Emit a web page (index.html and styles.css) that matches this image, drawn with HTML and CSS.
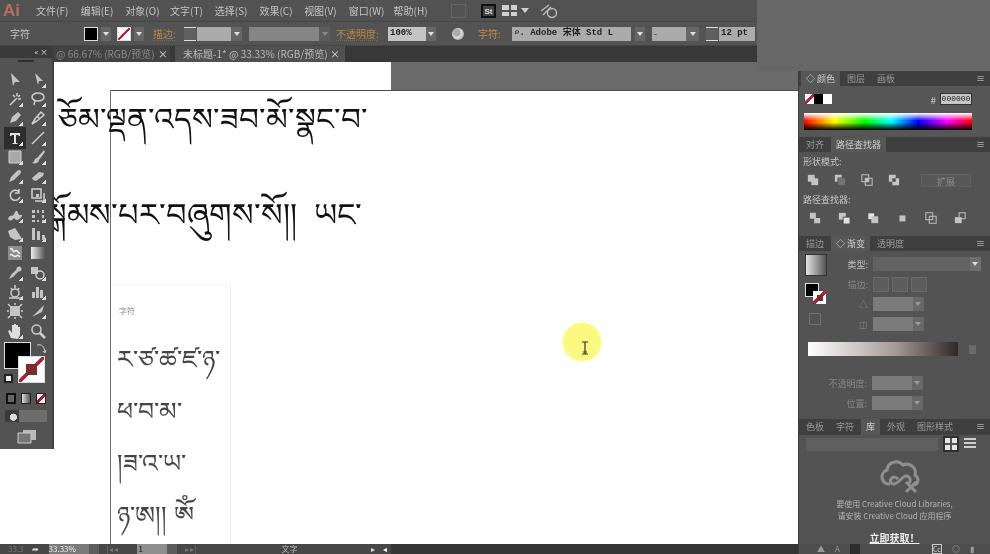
FILE: index.html
```html
<!DOCTYPE html>
<html lang="zh-CN">

<head>
   <meta charset="UTF-8">
   <meta name="viewport" content="width=device-width, initial-scale=1.0">
   <title>Adobe Illustrator</title>
   <link rel="stylesheet" href="styles.css">
</head>

<body>
   <div class="menu-bar">
      <span class="logo">Ai</span>
      <nav class="menu-items">
         <span>文件(F)</span><span>编辑(E)</span><span>对象(O)</span><span>文字(T)</span><span>选择(S)</span>
         <span>效果(C)</span><span>视图(V)</span><span>窗口(W)</span><span>帮助(H)</span>
      </nav>
      <span class="app-btn app-dim"></span>
      <span class="app-btn app-st">St</span>
      <svg class="app-layout" width="30" height="14" viewBox="0 0 30 14">
         <path d="M1 1h7v5H1zM10 1h6v5h-6zM1 8h7v4H1zM10 8h6v4h-6z" fill="#d0d0d0" />
         <path d="M20 4h8l-4 5z" fill="#d0d0d0" />
      </svg>
      <svg class="app-sync" width="18" height="16" viewBox="0 0 18 16" fill="none" stroke="#bbb" stroke-width="1.4">
         <path d="M1 8l8-6M3 12l8-8" />
         <circle cx="12" cy="10" r="4.5" />
      </svg>
   </div>

   <div class="control-bar">
      <span class="ctl-title">字符</span>
      <span class="swatch swatch-fill"></span>
      <span class="arrow-btn w-10"></span>
      <span class="swatch swatch-none"></span>
      <span class="arrow-btn w-10"></span>
      <span class="ctl-label m-stroke">描边:</span>
      <span class="spin"></span>
      <span class="field w-34"></span>
      <span class="arrow-btn w-11"></span>
      <span class="field field-dim w-70 m-brush"></span>
      <span class="arrow-btn arrow-dim w-11"></span>
      <span class="ctl-label m-opacity">不透明度:</span>
      <span class="field w-38 m-opval">100%</span>
      <span class="arrow-btn w-10"></span>
      <span class="globe"></span>
      <span class="ctl-label m-char">字符:</span>
      <span class="field field-font">&#8981;. Adobe 宋体 Std L</span>
      <span class="arrow-btn w-10 m-2"></span>
      <span class="field w-34 m-style">-</span>
      <span class="arrow-btn w-13"></span>
      <span class="spin m-size"></span>
      <span class="field field-mono w-36">12 pt</span>
   </div>

   <div class="tab-bar">
      <div class="doc-tab">@ 66.67% (RGB/预览)<span class="tab-x">×</span></div>
      <div class="doc-tab doc-tab-active">未标题-1* @ 33.33% (RGB/预览)<span class="tab-x">×</span></div>
   </div>

   <div class="workspace">
      <main class="canvas">
         <div class="pasteboard"></div>
         <div class="artboard-top"></div>
         <div class="artboard-left"></div>

         <div class="tibetan line-1">ཅོམ་ལྡན་འདས་ཟབ་མོ་སྣང་བ་</div>
         <div class="tibetan line-2">སྒོམས་པར་བཞུགས་སོ།།  ཡང་</div>

         <div class="char-panel">
            <div class="char-title">字符</div>
            <div class="tibetan-small row-1">ར་ཙ་ཚ་ཛ་ཉ་</div>
            <div class="tibetan-small row-2">ཕ་བ་མ་</div>
            <div class="tibetan-small row-3">།ཟ་འ་ཡ་</div>
            <div class="tibetan-small row-4">ཉ་ཨ།། ༀ</div>
         </div>

         <div class="cursor-spot">
            <svg width="8" height="14" viewBox="0 0 8 14" fill="none" stroke="#333" stroke-width="1.2">
               <path d="M1 1h6M4 1v12M1 13h6M2 11h4" />
            </svg>
         </div>

         <aside class="toolbar">
            <div class="tool-head">
               <span class="tool-head-icons">«&nbsp;×</span>
            </div>
            <div class="tool-grip"></div>
            <div class="tool-grid">
               <svg viewBox="0 0 16 16"><path d="M4 1l9 9H8l-2 4z" class="i-f" /></svg>
               <svg class="more" viewBox="0 0 16 16"><path d="M5 1l8 8-4 0-1 4z" class="i-f" /></svg>
               <svg class="more" viewBox="0 0 16 16"><path d="M3 14l7-7M10 2v3M13 4l-2 2M14 8h-3M6 4l2 2" class="i-s" /></svg>
               <svg class="more" viewBox="0 0 16 16"><ellipse cx="8" cy="6" rx="6" ry="4" class="i-s" /><path d="M5 9l-1 5" class="i-s" /></svg>
               <svg class="more" viewBox="0 0 16 16"><path d="M3 13l2-6 6-5 3 3-5 6z" class="i-f" /></svg>
               <svg class="more" viewBox="0 0 16 16"><path d="M2 14l3-5 6-7 3 3-7 6zM7 6l3 3" class="i-s" /></svg>
               <svg class="more tool-on" viewBox="0 0 16 16"><path d="M3 3h10v3h-1l-1-1H9v8h1.500v1h-5v-1H7V5H5L4 6H3z" fill="#e4e4e4" /></svg>
               <svg class="more" viewBox="0 0 16 16"><path d="M2 14L14 2" class="i-s" /></svg>
               <svg class="more" viewBox="0 0 16 16"><path d="M2 2h12v12H2z" fill="#a8a8a8" stroke="#d0d0d0" /></svg>
               <svg class="more" viewBox="0 0 16 16"><path d="M14 1L7 9l2 2 6-8zM7 9c-3 0-2 4-5 5 3 1 7 0 7-3z" class="i-f" /></svg>
               <svg class="more" viewBox="0 0 16 16"><path d="M2 14l2-5 6-6 3 3-6 6z" class="i-f" /><circle cx="12" cy="4" r="2" class="i-f" /></svg>
               <svg class="more" viewBox="0 0 16 16"><path d="M2 10l7-6 5 1-1 3-7 5-3-1z" class="i-f" /></svg>
               <svg class="more" viewBox="0 0 16 16"><path d="M12 5a5 5 0 1 0 1 5M12 2v4H8" class="i-s" /></svg>
               <svg class="more" viewBox="0 0 16 16"><path d="M2 2h9v9H2zM5 14h9V6" class="i-s" /><path d="M6 7h3v3H6z" class="i-f" /></svg>
               <svg class="more" viewBox="0 0 16 16"><path d="M1 12c2-6 4-1 6-5s3-4 4-1 3 2 4 2-2 5-5 5-2-3-4-1-3 2-5 0z" class="i-f" /></svg>
               <svg class="more" viewBox="0 0 16 16"><path d="M2 3h3v3H2zM7 3h2v3H7zM12 3h2v3h-2zM2 8h3v3H2zM12 8h2v3h-2zM2 13h3v2H2zM7 13h2v2H7zM12 13h2v2h-2z" class="i-f" /></svg>
               <svg class="more" viewBox="0 0 16 16"><path d="M1 5l7-3 4 6 3 5-7 1-5-3z" class="i-f" /></svg>
               <svg class="more" viewBox="0 0 16 16"><path d="M2 2h3v12H2zM7 5h3v9H7zM12 9h3v5h-3z" class="i-f" /></svg>
               <svg viewBox="0 0 16 16"><path d="M1 1h14v14H1z" fill="#8d8d8d" /><path d="M3 4c3-2 2 4 5 2s3 3 5 2M3 10c3-2 3 3 6 1s2 1 4 0" stroke="#ececec" stroke-width="1.600" fill="none" /></svg>
               <svg viewBox="0 0 16 16"><rect x="1" y="2" width="14" height="12" fill="url(#tool-grad)" /></svg>
               <svg class="more" viewBox="0 0 16 16"><path d="M2 14l2-4 6-6 2 2-6 6z" class="i-f" /><circle cx="12" cy="4" r="2.500" class="i-f" /></svg>
               <svg class="more" viewBox="0 0 16 16"><path d="M1 2h7v7H1z" class="i-f" /><circle cx="10" cy="10" r="4" class="i-s" /></svg>
               <svg class="more" viewBox="0 0 16 16"><circle cx="8" cy="9" r="4" class="i-s" /><path d="M8 1v3M4 4l1 2M12 4l-1 2M2 14h12" class="i-s" /></svg>
               <svg class="more" viewBox="0 0 16 16"><path d="M2 8h3v6H2zM6 3h3v11H6zM10 6h3v8h-3z" class="i-f" /></svg>
               <svg viewBox="0 0 16 16"><path d="M3 3h10v10H3z" class="i-f" /><path d="M1 1l2 2M15 1l-2 2M1 15l2-2M15 15l-2-2M8 0v2M8 14v2M0 8h2M14 8h2" class="i-s" /></svg>
               <svg class="more" viewBox="0 0 16 16"><path d="M2 14L14 2 12 9z" class="i-f" /></svg>
               <svg class="more" viewBox="0 0 16 16"><path d="M4 15L1 8l2-1 2 3V2h2v6V1h2v7-6h2v6-4h2v8l-2 4z" fill="#dedede" /></svg>
               <svg viewBox="0 0 16 16"><circle cx="6.500" cy="6.500" r="4.500" class="i-s" /><path d="M10 10l5 5" stroke="#d0d0d0" stroke-width="2.500" /></svg>
            </div>

            <div class="fill-stroke">
               <div class="big-stroke"></div>
               <div class="big-fill"></div>
               <svg class="mini-swap" width="11" height="11" viewBox="0 0 11 11" fill="none" stroke="#ccc"><path d="M1 2c5-1 7 1 8 7" /><path d="M7 8l2 2 1-3" /></svg>
               <div class="mini-default"></div>
            </div>
            <div class="mode-row">
               <span class="mode-box mode-color"></span>
               <span class="mode-box mode-grad"></span>
               <span class="mode-box mode-none"></span>
            </div>
            <div class="draw-row">
               <span class="draw-on"></span>
               <span class="draw-off"></span>
            </div>
            <svg class="screen-mode" width="20" height="15" viewBox="0 0 20 15">
               <path d="M6 1h13v10H6z" fill="#b9b9b9" />
               <path d="M1 4h13v10H1z" fill="#777" stroke="#ccc" />
            </svg>
         </aside>
      </main>

      <aside class="dock">
         <section class="panel panel-color">
            <div class="panel-tabs">
               <span class="ptab ptab-on">◇ 颜色</span><span class="ptab">图层</span><span class="ptab">画板</span>
               <span class="ptab-menu">≡</span>
            </div>
            <div class="color-row">
               <span class="none-chip"></span><span class="black-chip"></span><span class="white-chip"></span>
               <span class="hash">#</span><span class="hex">000000</span>
            </div>
            <div class="spectrum"></div>
         </section>

         <section class="panel panel-path">
            <div class="panel-tabs">
               <span class="ptab">对齐</span><span class="ptab ptab-on">路径查找器</span>
               <span class="ptab-menu">≡</span>
            </div>
            <div class="p-label">形状模式:</div>
            <div class="icon-row">
               <svg viewBox="0 0 14 14"><path d="M1 1h8v8H1z" class="i-f" /><path d="M5 5h8v8H5z" class="i-f" /></svg>
               <svg viewBox="0 0 14 14"><path d="M1 1h8v3H4v5H1z" class="i-f" /><path d="M5 5h8v8H5z" class="i-d" /></svg>
               <svg viewBox="0 0 14 14"><path d="M1 1h8v8H1zM5 5h8v8H5z" class="i-o" /><path d="M5 5h4v4H5z" class="i-f" /></svg>
               <svg viewBox="0 0 14 14"><path d="M1 1h8v4H5v4H1zM9 5h4v8H5V9h4z" class="i-f" /></svg>
               <span class="expand">扩展</span>
            </div>
            <div class="p-label">路径查找器:</div>
            <div class="icon-row icon-row-6">
               <svg viewBox="0 0 14 14"><path d="M1 1h7v6h5v6H6V8H1z" class="i-f" /></svg>
               <svg viewBox="0 0 14 14"><path d="M1 1h8v8H1z" class="i-f" /><path d="M6 6h8v8H6z" class="i-w" /></svg>
               <svg viewBox="0 0 14 14"><path d="M1 1h8v8H1z" class="i-w" /><path d="M5 5h8v8H5z" class="i-f" /></svg>
               <svg viewBox="0 0 14 14"><path d="M4 4h7v7H4z" class="i-f" /></svg>
               <svg viewBox="0 0 14 14"><path d="M1 1h8v8H1zM5 5h8v8H5z" class="i-o" /></svg>
               <svg viewBox="0 0 14 14"><path d="M6 1h7v7H6z" class="i-o" /><path d="M1 6h8v7H1z" class="i-f" /></svg>
            </div>
         </section>

         <section class="panel panel-grad">
            <div class="panel-tabs">
               <span class="ptab">描边</span><span class="ptab ptab-on">◇ 渐变</span><span class="ptab">透明度</span>
               <span class="ptab-menu">≡</span>
            </div>
            <div class="grad-top">
               <div class="grad-preview">
                  <div class="grad-thumb"></div>
                  <div class="grad-swatches">
                     <span class="gs-stroke"></span>
                     <span class="gs-fill"></span>
                  </div>
                  <div class="grad-aspect"></div>
               </div>
               <div class="grad-fields">
                  <div class="g-row"><label>类型:</label><span class="g-select"></span></div>
                  <div class="g-row g-dim"><label>描边:</label><span class="g-stroke-btn"></span><span class="g-stroke-btn"></span><span class="g-stroke-btn"></span></div>
                  <div class="g-row g-dim"><label>△</label><span class="g-input"></span></div>
                  <div class="g-row g-dim"><label>◫</label><span class="g-input"></span></div>
               </div>
            </div>
            <div class="grad-slider-row">
               <div class="grad-slider"></div>
               <span class="trash"></span>
            </div>
            <div class="g-row g-low g-dim"><label>不透明度:</label><span class="g-input"></span></div>
            <div class="g-row g-low g-dim"><label>位置:</label><span class="g-input"></span></div>
         </section>

         <section class="panel panel-lib">
            <div class="panel-tabs">
               <span class="ptab">色板</span><span class="ptab">字符</span><span class="ptab ptab-on">库</span><span class="ptab">外观</span><span class="ptab">图形样式</span>
               <span class="ptab-menu">≡</span>
            </div>
            <div class="lib-row">
               <span class="lib-select"></span>
               <span class="lib-grid"></span>
               <span class="lib-list"></span>
            </div>
            <svg class="cloud" width="44" height="38" viewBox="0 0 44 38" fill="none" stroke="#8f8f8f" stroke-width="3">
               <path d="M12 28C3 28 1 17 9 14 10 6 20 3 25 9c7-3 14 3 12 10 5 4 3 9-1 10" />
               <path d="M20 23c-5-6-11 3-5 5 4 1 8-6 12-8 6-1 7 7 2 8" />
               <path d="M28 26l10 10M38 26L28 36" />
            </svg>
            <p class="lib-text">要使用 Creative Cloud Libraries,<br>请安装 Creative Cloud 应用程序</p>
            <a class="lib-link">立即获取！</a>
         </section>
         <div class="dock-foot">
            <span class="foot-icon">▲</span><span class="foot-icon">A</span><span class="foot-dark"></span>
            <span class="foot-box">Cc</span><span class="foot-icon">◎</span><span class="foot-icon">▮</span>
         </div>
      </aside>
   </div>

   <div class="status-bar">
      <span class="st-dim">33.3</span><span class="st-arrow">➦</span>
      <span class="st-zoom">33.33%</span><span class="st-drop"></span>
      <span class="st-dim st-nav">|◂ ◂</span>
      <span class="st-page">1</span><span class="st-drop"></span>
      <span class="st-dim st-nav">▸ ▸|</span>
      <span class="st-tool">文字</span>
      <span class="st-play">▸</span><span class="st-back">◂</span>
      <span class="st-scroll"></span>
   </div>

   <div class="blur-patch"></div>

   <svg class="defs" width="0" height="0">
      <defs>
         <linearGradient id="tool-grad">
            <stop offset="0" stop-color="#eee" />
            <stop offset="1" stop-color="#555" />
         </linearGradient>
      </defs>
   </svg>
</body>

</html>
```

FILE: styles.css
```css
* {
   box-sizing: border-box;
}

html,
body {
   margin: 0;
   height: 100%;
   overflow: hidden;
}

/* the reference is a soft video frame */
body {
   position: relative;
   display: flex;
   flex-direction: column;
   width: 990px;
   height: 554px;
   font-family: "Noto Sans CJK SC", "Liberation Sans", sans-serif;
   font-size: 10px;
   color: #c4c4c4;
   background: #535353;
   filter: blur(0.5px);
}

.defs {
   position: absolute;
}

/* top menu */
.menu-bar {
   height: 22px;
   flex: none;
   display: flex;
   align-items: center;
   background: #525252;
   border-bottom: 1px solid #474747;
}

.logo {
   width: 36px;
   padding-left: 3px;
   font: bold 17px "Liberation Sans", sans-serif;
   color: #b56f5c;
}

.menu-items {
   display: flex;
   width: 408px;
   gap: 11.7px;
   white-space: nowrap;
}

.menu-items span {
   width: 33px;
}

.app-btn {
   width: 15px;
   height: 14px;
   font: bold 8px "Liberation Sans", sans-serif;
   text-align: center;
   line-height: 12px;
}

.app-dim {
   margin-left: 7px;
   border: 1px solid #666;
}

.app-st {
   color: #ddd;
   margin-left: 15px;
   border: 2px solid #111;
   background: #444;
}

.app-layout {
   margin-left: 5px;
}

.app-sync {
   margin-left: 9px;
}

/* control bar */
.control-bar {
   height: 24px;
   flex: none;
   display: flex;
   align-items: center;
   background: #535353;
   border-bottom: 1px solid #474747;
   padding-left: 10px;
}

.ctl-title {
   width: 74px;
}

.swatch {
   width: 14px;
   height: 14px;
   border: 1px solid #ddd;
   margin-right: 3px;
}

.swatch-fill {
   background: #000;
}

.swatch-none {
   margin-left: 6px;
   background: linear-gradient(135deg, #fff 0 44%, #c8203c 44% 56%, #fff 56%);
}

.arrow-btn {
   height: 14px;
   display: block;
   background: #666;
   position: relative;
}

.arrow-btn::after {
   content: "";
   position: absolute;
   left: 50%;
   top: 5px;
   margin-left: -3px;
   border: 3px solid transparent;
   border-top: 4px solid #e0e0e0;
   border-bottom: 0;
}

.arrow-dim {
   background: #5c5c5c;
}

.arrow-dim::after {
   border-top-color: #888;
}

.w-10 {
   width: 10px;
}

.w-11 {
   width: 11px;
}

.w-13 {
   width: 13px;
}

.w-34 {
   width: 34px;
}

.w-36 {
   width: 36px;
}

.w-38 {
   width: 38px;
}

.w-70 {
   width: 70px;
}

.ctl-label {
   color: #b98842;
   white-space: nowrap;
   border-bottom: 1px dotted #8a6a3a;
   line-height: 13px;
}

.m-stroke {
   margin-left: 9px;
   width: 22px;
}

.spin {
   width: 12px;
   height: 14px;
   margin-left: 9px;
   background: #5f5f5f;
   border-top: 1px solid #ddd;
   border-bottom: 1px solid #ddd;
}

.field {
   height: 14px;
   line-height: 13px;
   padding-left: 2px;
   color: #222;
   background: #ababab;
   white-space: nowrap;
   overflow: hidden;
   margin-left: 1px;
   font-size: 9px;
}

.field-dim {
   background: #858585;
}

.m-brush {
   margin-left: 7px;
}

.m-opacity {
   margin-left: 6px;
   width: 41px;
}

.m-opval {
   margin-left: 11px;
   background: #c4c4c4;
   font-family: "Liberation Mono", monospace;
   font-weight: bold;
}

.globe {
   width: 12px;
   height: 12px;
   margin: 0 14px 0 16px;
   border-radius: 50%;
   background: radial-gradient(circle at 40% 40%, #aaa 0 30%, #ddd 45%, #777);
}

.m-char {
   width: 26px;
   margin-right: 7px;
   color: #c98a44;
   border: 0;
}

.field-font {
   width: 119px;
   font-family: "Liberation Mono", "Noto Sans CJK SC", monospace;
   font-weight: bold;
}

.m-2 {
   margin-left: 4px;
}

.m-style {
   margin-left: 7px;
}

.m-size {
   margin-left: 7px;
}

.field-mono {
   font-family: "Liberation Mono", monospace;
   font-weight: bold;
}

/* document tabs */
.tab-bar {
   height: 16px;
   flex: none;
   display: flex;
   padding-left: 54px;
   gap: 5px;
   background: #383838;
}

.doc-tab {
   width: 116px;
   display: flex;
   justify-content: space-between;
   padding: 0 2px;
   line-height: 16px;
   color: #8a8a8a;
   background: #424242;
   white-space: nowrap;
}

.doc-tab-active {
   width: 170px;
   padding: 0 5px 0 8px;
   color: #bbb;
   background: #505050;
}

.tab-x {
   color: #ddd;
}

/* canvas */
.workspace {
   flex: 1;
   display: flex;
   min-height: 0;
}

.canvas {
   position: relative;
   flex: 1;
   background: #fff;
}

.pasteboard {
   position: absolute;
   left: 391px;
   top: 0;
   right: 0;
   height: 28px;
   background: #6b6b6b;
}

.artboard-top {
   position: absolute;
   left: 110px;
   top: 28px;
   right: 0;
   height: 1px;
   background: #4c4c4c;
}

.artboard-left {
   position: absolute;
   left: 110px;
   top: 28px;
   bottom: 0;
   width: 1px;
   background: #6e6e6e;
}

.tibetan {
   position: absolute;
   font-family: "Noto Sans", "DejaVu Sans", serif;
   color: #111;
   white-space: pre;
}

.line-1 {
   right: 430px;
   top: 23px;
   font-size: 31px;
}

.line-2 {
   right: 436px;
   top: 117px;
   font-size: 32px;
}

.char-panel {
   position: absolute;
   left: 111px;
   top: 222px;
   width: 120px;
   height: 270px;
   border-right: 1px solid #f1f1f1;
   border-top: 1px solid #f6f6f6;
}

.char-title {
   margin: 20px 0 26px 8px;
   font-size: 8px;
   color: #8a8a8a;
}

.tibetan-small {
   font-family: "Noto Sans", "DejaVu Sans", serif;
   font-size: 25px;
   color: #444;
   white-space: nowrap;
   margin: 20px 0 0 6px;
   line-height: 32px;
}

.cursor-spot {
   position: absolute;
   left: 563px;
   top: 261px;
   width: 38px;
   height: 38px;
   display: flex;
   align-items: center;
   justify-content: center;
   padding: 12px 0 0 5px;
   border-radius: 50%;
   background: #fbf97f;
   box-shadow: 0 0 4px #fdfcb0;
}

/* tools */
.toolbar {
   position: absolute;
   left: 0;
   top: -16px;
   width: 54px;
   height: 403px;
   background: #535353;
   border-right: 2px solid #3e3e3e;
}

.tool-head {
   height: 12px;
   background: #3a3a3a;
   color: #ddd;
   font-size: 8px;
   line-height: 12px;
   text-align: right;
   padding-right: 4px;
}

.tool-grip {
   width: 16px;
   height: 2px;
   margin: 2px auto 0;
   background: #2f2f2f;
}

.tool-grid {
   display: grid;
   grid-template-columns: 16px 16px;
   grid-auto-rows: 19.3px;
   column-gap: 7px;
   padding: 8px 0 0 7px;
   align-items: center;
}

.tool-grid svg {
   width: 16px;
   height: 16px;
   overflow: visible;
}

.more {
   background: linear-gradient(135deg, transparent 50%, #ddd 50%) right bottom / 4px 4px no-repeat;
}

.tool-on {
   background-color: #2d2d2d;
   outline: 3px solid #2d2d2d;
}

.i-f {
   fill: #c4c4c4;
}

.i-s {
   fill: none;
   stroke: #cfcfcf;
   stroke-width: 1.5;
}

.i-d {
   fill: #747474;
}

.i-w {
   fill: #e2e2e2;
   stroke: #444;
}

.i-o {
   fill: none;
   stroke: #c0c0c0;
   stroke-width: 1.2;
}

.fill-stroke {
   position: relative;
   height: 49px;
   margin-top: 2px;
}

.big-stroke {
   position: absolute;
   left: 4px;
   top: 0;
   width: 27px;
   height: 27px;
   background: #000;
   border: 1px solid #ddd;
}

.big-fill {
   position: absolute;
   left: 18px;
   top: 14px;
   width: 27px;
   height: 27px;
   background:
      linear-gradient(#7d2a2a, #7d2a2a) center / 11px 11px no-repeat,
      linear-gradient(135deg, #fff 0 45%, #b3213a 45% 55%, #fff 55%);
   border: 1px solid #ddd;
}

.mini-swap {
   position: absolute;
   left: 36px;
   top: 1px;
}

.mini-default {
   position: absolute;
   left: 4px;
   top: 32px;
   width: 9px;
   height: 9px;
   background: #eee;
   border: 2px solid #222;
}

.mode-row {
   display: flex;
   gap: 5px;
   padding-left: 6px;
   align-items: center;
   height: 14px;
}

.mode-box {
   width: 10px;
   height: 11px;
   border: 1px solid #222;
}

.mode-color {
   background: #666;
   border: 2px solid #111;
}

.mode-grad {
   background: linear-gradient(90deg, #ddd, #555);
}

.mode-none {
   background: linear-gradient(135deg, #eee 0 40%, #a01a2c 40% 60%, #eee 60%);
}

.draw-row {
   display: flex;
   margin: 5px 0 0 5px;
   height: 12px;
}

.draw-on {
   width: 14px;
   background: radial-gradient(circle at 60% 60%, #ddd 0 30%, #3a3a3a 35%);
}

.draw-off {
   width: 28px;
   background: #6d6d6d;
}

.screen-mode {
   display: block;
   margin: 7px 0 0 17px;
}

/* right dock */
.dock {
   position: relative;
   width: 192px;
   flex: none;
   display: flex;
   flex-direction: column;
   background: #535353;
   border-left: 1px solid #3b3b3b;
}

.panel {
   margin-top: 1px;
   overflow: hidden;
}

.panel-color {
   height: 65px;
   margin-top: 9px;
   background: #565656;
}

.panel-path {
   height: 97px;
}

.panel-grad {
   height: 182px;
   margin-top: 2px;
}

.panel-lib {
   flex: 1;
   position: relative;
}

.panel-tabs {
   height: 15px;
   display: flex;
   align-items: stretch;
   padding-left: 2px;
   gap: 2px;
   background: #3f3f3f;
   font-size: 9px;
   line-height: 15px;
   color: #999;
}

.ptab {
   padding: 0 5px;
   white-space: nowrap;
}

.ptab-on {
   background: #575757;
   color: #ccc;
}

.ptab-menu {
   margin-left: auto;
   padding-right: 5px;
   color: #ddd;
}

.color-row {
   display: flex;
   align-items: center;
   height: 26px;
   padding: 0 18px 0 6px;
}

.none-chip,
.black-chip,
.white-chip {
   width: 9px;
   height: 10px;
}

.none-chip {
   background: linear-gradient(135deg, #fff 0 40%, #b3213a 40% 60%, #fff 60%);
}

.black-chip {
   background: #000;
}

.white-chip {
   background: #fff;
}

.hash {
   margin-left: auto;
   margin-right: 4px;
}

.hex {
   width: 32px;
   height: 12px;
   font-family: "Liberation Mono", monospace;
   font-size: 8px;
   line-height: 10px;
   text-align: center;
   color: #222;
   background: #c6c6c6;
   border: 1px solid #333;
}

.spectrum {
   width: 168px;
   height: 17px;
   margin: 1px 0 0 5px;
   background:
      linear-gradient(#fff 0, rgba(255, 255, 255, 0) 45%, rgba(0, 0, 0, 0) 55%, #000 100%),
      linear-gradient(90deg, #f00, #ff0 18%, #0f0 36%, #0ff 52%, #00f 68%, #f0f 85%, #f00);
}

.p-label {
   padding: 3px 0 0 4px;
   height: 18px;
   color: #c6c6c6;
   font-size: 9px;
}

.icon-row {
   display: flex;
   align-items: center;
   gap: 15px;
   height: 20px;
   padding-left: 8px;
}

.icon-row svg {
   width: 12px;
   height: 12px;
}

.icon-row-6 {
   gap: 17px;
   padding-left: 10px;
}

.expand {
   width: 50px;
   height: 13px;
   margin-left: 6px;
   text-align: center;
   line-height: 13px;
   font-size: 9px;
   color: #8d8d8d;
   border: 1px solid #606060;
   background: #585858;
}

.grad-top {
   display: flex;
   padding: 3px 0 0 6px;
}

.grad-preview {
   width: 42px;
}

.grad-thumb {
   width: 22px;
   height: 22px;
   background: linear-gradient(90deg, #e4e4e4, #555);
   border: 1px solid #333;
}

.grad-swatches {
   position: relative;
   height: 24px;
   margin-top: 7px;
}

.gs-stroke {
   position: absolute;
   left: 0;
   top: 0;
   width: 14px;
   height: 14px;
   background: #000;
   border: 1px solid #ddd;
}

.gs-fill {
   position: absolute;
   left: 8px;
   top: 8px;
   width: 13px;
   height: 13px;
   background:
      linear-gradient(#7d2a2a, #7d2a2a) center / 6px 6px no-repeat,
      linear-gradient(135deg, #fff 0 40%, #b3213a 40% 60%, #fff 60%);
}

.grad-aspect {
   width: 12px;
   height: 12px;
   margin: 6px 0 0 4px;
   border: 1px solid #707070;
}

.grad-fields {
   flex: 1;
}

.g-row {
   display: flex;
   align-items: center;
   height: 20px;
   gap: 2px;
   color: #c2c2c2;
   font-size: 9px;
}

.g-row label {
   width: 24px;
   padding-right: 3px;
   text-align: right;
   white-space: nowrap;
}

.g-dim {
   color: #868686;
}

.g-select {
   width: 108px;
   height: 14px;
   background: linear-gradient(90deg, #626262 0 90%, #6e6e6e 90%);
   position: relative;
}

.g-select::after,
.g-input::after {
   content: "";
   position: absolute;
   right: 3px;
   top: 5px;
   border: 3px solid transparent;
   border-top: 4px solid #ddd;
   border-bottom: 0;
}

.g-stroke-btn {
   width: 16px;
   height: 15px;
   background: #5d5d5d;
   border: 1px solid #6a6a6a;
   margin-right: 1px;
}

.g-input {
   position: relative;
   width: 51px;
   height: 14px;
   background: linear-gradient(90deg, #7b7b7b 0 78%, #686868 78%);
}

.g-input::after {
   border-top-color: #9a9a9a;
}

.grad-slider-row {
   display: flex;
   align-items: center;
   padding: 6px 0 0 9px;
   height: 24px;
}

.grad-slider {
   width: 150px;
   height: 14px;
   background: linear-gradient(90deg, #fff, #a59b98 58%, #2e2826);
}

.trash {
   width: 7px;
   height: 9px;
   margin-left: 11px;
   background: #6a6a6a;
}

.g-low {
   padding-left: 26px;
}

.g-low label {
   width: 45px;
}

.grad-slider-row + .g-low {
   margin-top: 15px;
}

.panel-lib .panel-tabs {
   height: 16px;
}

.lib-row {
   display: flex;
   align-items: center;
   height: 18px;
   padding-left: 7px;
}

.lib-select {
   width: 132px;
   height: 13px;
   background: #5f5f5f;
}

.lib-grid,
.lib-list {
   width: 12px;
   height: 12px;
   margin-left: 7px;
}

.lib-grid {
   background:
      linear-gradient(#e6e6e6, #e6e6e6) 0 0 / 5px 5px no-repeat,
      linear-gradient(#e6e6e6, #e6e6e6) 100% 0 / 5px 5px no-repeat,
      linear-gradient(#e6e6e6, #e6e6e6) 0 100% / 5px 5px no-repeat,
      linear-gradient(#e6e6e6, #e6e6e6) 100% 100% / 5px 5px no-repeat;
   outline: 2px solid #2e2e2e;
}

.lib-list {
   background: repeating-linear-gradient(#cfcfcf 0 2px, transparent 2px 4px);
}

.cloud {
   display: block;
   margin: 3px 0 0 79px;
}

.lib-text {
   margin: 4px 0 0;
   font-size: 8px;
   line-height: 12px;
   text-align: center;
   color: #b4b4b4;
}

.lib-link {
   display: block;
   margin-top: 9px;
   line-height: 14px;
   text-align: center;
   font-size: 10px;
   font-weight: bold;
   color: #eee;
   text-decoration: underline;
}

.dock-foot {
   height: 10px;
   flex: none;
   display: flex;
   align-items: center;
   gap: 10px;
   padding-left: 18px;
   font-size: 8px;
   line-height: 10px;
   color: #9a9a9a;
   background: #4d4d4d;
   overflow: hidden;
}

.foot-dark {
   width: 10px;
   height: 10px;
   background: #2d2d2d;
}

.foot-box {
   margin-left: 62px;
   border: 1px solid #ccc;
   color: #ddd;
   line-height: 8px;
   font-size: 7px;
}

/* status bar */
.status-bar {
   position: absolute;
   left: 0;
   bottom: 0;
   width: 798px;
   height: 10px;
   display: flex;
   align-items: center;
   font-size: 8px;
   line-height: 10px;
   background: #474747;
   color: #aaa;
   overflow: hidden;
}

.st-dim {
   color: #777;
   margin-left: 8px;
}

.st-arrow {
   margin-left: 8px;
   color: #ddd;
}

.st-zoom {
   width: 40px;
   margin-left: 10px;
   color: #eee;
   background: #7a7a7a;
}

.st-drop {
   width: 10px;
   height: 10px;
   background: #5d5d5d;
}

.st-nav {
   width: 30px;
}

.st-page {
   width: 30px;
   padding-left: 2px;
   color: #111;
   background: #8f8f8f;
}

.st-tool {
   margin-left: 67px;
   color: #bbb;
}

.st-play {
   margin-left: 73px;
   color: #ddd;
}

.st-back {
   margin-left: 8px;
   color: #fff;
}

.st-scroll {
   flex: 1;
   height: 10px;
   margin-left: 4px;
   background: #363636;
}

/* mosaic over the top right corner */
.blur-patch {
   position: absolute;
   left: 757px;
   top: 0;
   width: 233px;
   height: 71px;
   background: #676767;
}
```
